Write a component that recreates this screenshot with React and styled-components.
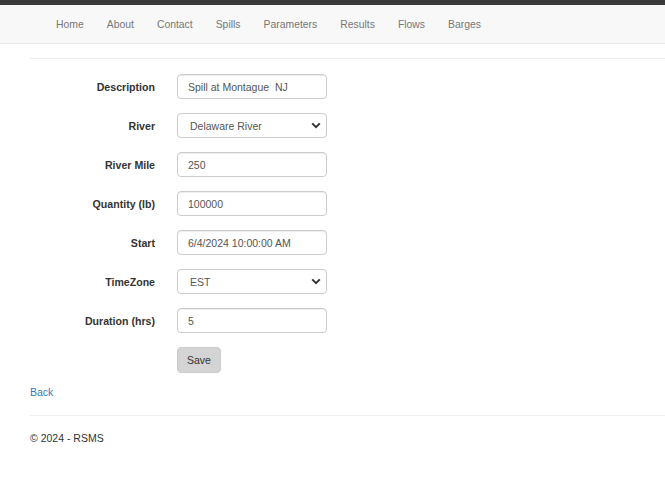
import React from "react";
import styled, { createGlobalStyle } from "styled-components";

const GlobalStyle = createGlobalStyle`
  body {
    margin: 0;
    font-family: "Liberation Sans", Arial, sans-serif;
    font-size: 10.5px;
    color: #333;
    background: #fff;
  }
`;

const TopStrip = styled.div`
  height: 5px;
  background: #3a3a3a;
`;

const NavBar = styled.nav`
  height: 38px;
  background: #f8f8f8;
  border-bottom: 1px solid #e7e7e7;
  display: flex;
  align-items: center;
  padding-left: 44.5px;
`;

const NavLink = styled.a`
  color: #777;
  text-decoration: none;
  padding: 0 11.5px;
  font-size: 10.4px;
`;

const Main = styled.main`
  padding-left: 30px;
`;

const Rule = styled.hr`
  border: 0;
  border-top: 1px solid #eee;
  margin: ${(p) => p.$margin || "0"};
`;

const Form = styled.form`
  display: grid;
  grid-template-columns: 125px 150px;
  column-gap: 22px;
  row-gap: 14px;
  align-items: center;
  margin-top: 15px;
`;

const Label = styled.label`
  text-align: right;
  font-weight: bold;
  font-size: 10.6px;
  color: #333;
`;

const Field = styled.input`
  box-sizing: border-box;
  width: 150px;
  height: 25px;
  border: 1px solid #ccc;
  border-radius: 4px;
  padding: 0 10px;
  font-family: inherit;
  font-size: 10.5px;
  color: #555;
  box-shadow: inset 0 1px 1px rgba(0, 0, 0, 0.075);
`;

const SelectWrap = styled.div`
  position: relative;
  width: 150px;
  height: 25px;
`;

const Select = styled.select`
  box-sizing: border-box;
  width: 150px;
  height: 25px;
  border: 1px solid #ccc;
  border-radius: 4px;
  padding: 0 10px 0 12px;
  font-family: inherit;
  font-size: 10.5px;
  color: #555;
  background: #fff;
  appearance: none;
`;

const Chevron = styled.svg`
  position: absolute;
  right: 6px;
  top: 9px;
  pointer-events: none;
`;

const SaveButton = styled.button`
  grid-column: 2;
  justify-self: start;
  width: 44px;
  height: 26px;
  border: 1px solid #ccc;
  border-radius: 4px;
  background: #d4d4d4;
  font-family: inherit;
  font-size: 10.5px;
  color: #333;
  padding: 0;
`;

const BackLink = styled.a`
  display: block;
  margin-top: 13px;
  color: #337ab7;
  text-decoration: none;
  font-size: 10.5px;
`;

const Footer = styled.footer`
  font-size: 10.5px;
  color: #333;
  margin-top: 16px;
`;

const DownIcon = () => (
  <Chevron width="10" height="7" viewBox="0 0 10 7">
    <path d="M1.2 1.4 L5 5.2 L8.8 1.4" fill="none" stroke="#333" strokeWidth="2" />
  </Chevron>
);

const navItems = ["Home", "About", "Contact", "Spills", "Parameters", "Results", "Flows", "Barges"];

export default function App() {
  return (
    <>
      <GlobalStyle />
      <TopStrip />
      <NavBar>
        {navItems.map((n) => (
          <NavLink key={n} href="#">{n}</NavLink>
        ))}
      </NavBar>
      <Main>
        <Rule $margin="14px 0 0 0" />
        <Form>
          <Label>Description</Label>
          <Field defaultValue="Spill at Montague  NJ" />
          <Label>River</Label>
          <SelectWrap>
            <Select defaultValue="Delaware River">
              <option>Delaware River</option>
            </Select>
            <DownIcon />
          </SelectWrap>
          <Label>River Mile</Label>
          <Field defaultValue="250" />
          <Label>Quantity (lb)</Label>
          <Field defaultValue="100000" />
          <Label>Start</Label>
          <Field defaultValue="6/4/2024 10:00:00 AM" />
          <Label>TimeZone</Label>
          <SelectWrap>
            <Select defaultValue="EST">
              <option>EST</option>
            </Select>
            <DownIcon />
          </SelectWrap>
          <Label>Duration (hrs)</Label>
          <Field defaultValue="5" />
          <SaveButton type="button">Save</SaveButton>
        </Form>
        <BackLink href="#">Back</BackLink>
        <Rule $margin="17px 0 0 0" />
        <Footer>© 2024 - RSMS</Footer>
      </Main>
    </>
  );
}
